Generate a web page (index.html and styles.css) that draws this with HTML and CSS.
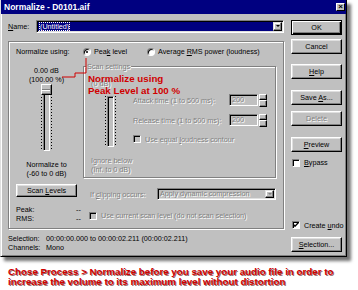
FILE: index.html
```html
<!DOCTYPE html>
<html lang="en">
<head>
    <meta charset="UTF-8">
    <meta name="viewport" content="width=device-width, initial-scale=1.0">
    <title>Normalize - D0101.aif</title>
    <link rel="stylesheet" href="styles.css">
</head>
<body>
    <div class="window">
        <div class="titlebar">
            <span>Normalize - D0101.aif</span>
            <span class="close">&#215;</span>
        </div>

        <div class="content">
            <div class="main">
                <!-- preset name -->
                <div class="name-row">
                    <span class="name-label"><u>N</u>ame:</span>
                    <div class="combo">
                        <div class="combo-text selected"><span class="focus">(Untitled)</span></div>
                        <div class="combo-arrow"><span class="arrow"></span></div>
                    </div>
                </div>

                <div class="group">
                    <div class="using-row">
                        <span class="using-label">Normalize using:</span>
                        <span class="radio peak"><span class="radio-dot checked"></span><span>Pea<u>k</u> level</span></span>
                        <span class="radio"><span class="radio-dot"></span><span>Average <u>R</u>MS power (loudness)</span></span>
                    </div>

                    <div class="level-row">
                        <div class="slider-col">
                            <div class="lines">0.00 dB<br>(100.00 %)</div>
                            <div class="slider">
                                <span class="ticks"></span>
                                <span class="track"></span>
                                <span class="ticks"></span>
                                <span class="thumb"></span>
                            </div>
                            <div class="lines caption">Normalize to<br>(-60 to 0 dB)</div>
                        </div>

                        <fieldset class="scan disabled">
                            <legend>Scan settings</legend>
                            <div class="scan-slider">
                                <div class="lines">(0 dB)</div>
                                <div class="slider small">
                                    <span class="ticks"></span>
                                    <span class="track"></span>
                                    <span class="ticks"></span>
                                </div>
                                <div class="lines caption">Ignore below<br>(Inf. to 0 dB)</div>
                            </div>
                            <div class="scan-fields">
                                <div class="field-row">
                                    <span class="field-label">Attack time (1 to 500 ms):</span>
                                    <span class="edit">200</span>
                                    <span class="spin"><span class="spin-up"></span><span class="spin-down"></span></span>
                                </div>
                                <div class="field-row">
                                    <span class="field-label">Release time (1 to 500 ms):</span>
                                    <span class="edit">200</span>
                                    <span class="spin"><span class="spin-up"></span><span class="spin-down"></span></span>
                                </div>
                                <div class="check-row loudness">
                                    <span class="check off"></span>
                                    <span>Use equal <u>l</u>oudness contour</span>
                                </div>
                            </div>
                        </fieldset>
                    </div>

                    <div class="scan-row">
                        <span class="btn scan-btn">Scan <u>L</u>evels</span>
                        <div class="clip disabled">
                            <span class="clip-label">If <u>c</u>lipping occurs:</span>
                            <div class="combo clip-combo">
                                <div class="combo-text">Apply dynamic compression</div>
                                <div class="combo-arrow"><span class="arrow"></span></div>
                            </div>
                        </div>
                    </div>

                    <div class="peak-row">
                        <div class="readings">
                            <span>Peak:</span><span>--</span>
                            <span>RMS:</span><span>--</span>
                        </div>
                        <div class="check-row disabled">
                            <span class="check off"></span>
                            <span>Use current scan level (do not scan selection)</span>
                        </div>
                    </div>
                </div>

                <div class="info">
                    <span>Selection:</span><span>00:00:00.000 to 00:00:02.211 (00:00:02.211)</span>
                    <span>Channels:</span><span>Mono</span>
                </div>
            </div>

            <div class="side">
                <span class="btn default">OK</span>
                <span class="btn cancel">Cancel</span>
                <span class="btn help"><u>H</u>elp</span>
                <span class="btn save">Save <u>A</u>s...</span>
                <span class="btn delete disabled">Delete</span>
                <span class="btn preview"><u>P</u>review</span>
                <div class="check-row bypass">
                    <span class="check"></span>
                    <span><u>B</u>ypass</span>
                </div>
                <div class="check-row undo">
                    <span class="check"><svg width="6" height="6" viewBox="0 0 6 6"><polyline points="0.5,2.5 2,4.2 5.5,0.5" fill="none" stroke="#000" stroke-width="1.3"/></svg></span>
                    <span>Create <u>u</u>ndo</span>
                </div>
                <span class="btn selection"><u>S</u>election...</span>
            </div>
        </div>

        <!-- callout drawn over the dialog -->
        <svg class="pointer" width="100" height="90">
            <polyline points="85,58 85,73 74,73 74,77 61,77" fill="none" stroke="#d00000" stroke-width="1"/>
        </svg>
        <div class="annotation">Normalize using<br>Peak Level at 100 %</div>
    </div>

    <p class="note">Chose Process &gt; Normalize before you save your audio file in order to<br>increase the volume to its maximum level without distortion</p>
</body>
</html>
```

FILE: styles.css
```css
body {
    margin: 0;
    background: #fff;
    font-family: "Liberation Sans", Arial, sans-serif;
    font-size: 7.2px;
    color: #000;
}
.window {
    position: relative;
    width: 347px;
    height: 257px;
    box-sizing: border-box;
    display: flex;
    flex-direction: column;
    background: #c0c0c0;
    border: 1px solid;
    border-top: 0;
    border-color: #dfdfdf #000 #000 #dfdfdf;
    box-shadow: inset 1px 0 #fff, inset -1px -1px #808080, 4px 4px 3px rgba(0, 0, 0, 0.55);
}
.titlebar {
    height: 15px;
    display: flex;
    align-items: center;
    justify-content: space-between;
    padding: 0 1px 0 3px;
    background: #000080;
    color: #fff;
    font-size: 8.5px;
    font-weight: bold;
}
.close {
    width: 9px;
    height: 8px;
    box-sizing: border-box;
    background: #c0c0c0;
    color: #000;
    border: 1px solid;
    border-color: #fff #000 #000 #fff;
    font-size: 8px;
    line-height: 6px;
    text-align: center;
}
.content {
    flex: 1;
    display: flex;
    gap: 7px;
    padding: 6px 4px 4px 7px;
}
.main {
    width: 276px;
    display: flex;
    flex-direction: column;
}
.side {
    width: 51px;
    display: flex;
    flex-direction: column;
}

/* shared controls */
.disabled, .disabled .edit, .disabled .combo-text {
    color: #808080;
    text-shadow: 1px 1px 0 #fff;
}
.lines {
    line-height: 9px;
    white-space: nowrap;
}
.btn {
    display: block;
    height: 15px;
    box-sizing: border-box;
    line-height: 13px;
    text-align: center;
    border: 1px solid;
    border-color: #fff #000 #000 #fff;
    box-shadow: inset -1px -1px #808080, inset 1px 1px #dfdfdf;
    white-space: nowrap;
}
.btn.default {
    border-color: #000;
    box-shadow: inset 1px 1px #fff, inset -1px -1px #000, inset -2px -2px #808080;
}
.combo {
    display: flex;
    box-sizing: border-box;
    height: 13px;
    padding: 1px;
    border: 1px solid;
    border-color: #808080 #fff #fff #808080;
    box-shadow: inset 1px 1px #000, inset -1px -1px #dfdfdf;
    background: #fff;
}
.combo-text {
    flex: 1;
    line-height: 9px;
    padding-left: 1px;
    white-space: nowrap;
    overflow: hidden;
}
.combo-text.selected {
    background: #000080;
    color: #fff;
}
.focus {
    outline: 1px dotted #fff;
    outline-offset: -1px;
    padding: 0 1px;
}
.combo-arrow {
    width: 9px;
    box-sizing: border-box;
    display: flex;
    align-items: center;
    justify-content: center;
    background: #c0c0c0;
    border: 1px solid;
    border-color: #dfdfdf #000 #000 #dfdfdf;
    box-shadow: inset -1px -1px #808080, inset 1px 1px #fff;
}
.arrow {
    width: 0;
    height: 0;
    border-left: 2px solid transparent;
    border-right: 2px solid transparent;
    border-top: 2px solid #000;
}
.disabled .arrow {
    border-top-color: #808080;
}
.check-row {
    display: flex;
    align-items: center;
    gap: 4px;
    height: 9px;
    line-height: 9px;
    white-space: nowrap;
}
.check {
    width: 8px;
    height: 8px;
    box-sizing: border-box;
    display: flex;
    align-items: center;
    justify-content: center;
    background: #fff;
    border: 1px solid;
    border-color: #808080 #fff #fff #808080;
    box-shadow: inset 1px 1px #000;
}
.check.off {
    background: #c0c0c0;
}

/* name row */
.name-row {
    display: flex;
    align-items: center;
    height: 13px;
}
.name-label {
    width: 28px;
}
.name-row .combo {
    flex: 1;
}

/* main group */
.group {
    margin-top: 8px;
    height: 188px;
    box-sizing: border-box;
    display: flex;
    flex-direction: column;
    padding: 5.5px 7px 0;
    border: 1px solid #808080;
    box-shadow: inset 1px 1px #fff, 1px 1px #fff;
}
.using-row {
    display: flex;
    align-items: center;
    height: 9px;
    line-height: 9px;
    white-space: nowrap;
}
.using-label {
    width: 67px;
}
.radio {
    display: flex;
    align-items: center;
    gap: 3px;
}
.radio.peak {
    width: 64px;
}
.radio-dot {
    position: relative;
    width: 8px;
    height: 8px;
    box-sizing: border-box;
    border-radius: 50%;
    background: #fff;
    border: 1px solid;
    border-color: #808080 #fff #fff #808080;
    box-shadow: inset 1px 1px #000;
}
.radio-dot.checked::after {
    content: "";
    position: absolute;
    left: 2px;
    top: 2px;
    width: 2px;
    height: 2px;
    border-radius: 50%;
    background: #000;
}
.level-row {
    display: flex;
    gap: 6px;
    margin-top: 6px;
}
.slider-col {
    width: 61px;
    padding-top: 4px;
    display: flex;
    flex-direction: column;
    align-items: center;
    text-align: center;
}
.slider {
    position: relative;
    display: flex;
    gap: 1px;
    height: 68px;
}
.ticks {
    width: 1px;
    height: 57px;
    margin-top: 10px;
    background: repeating-linear-gradient(to bottom, #000 0 1px, transparent 1px 3px);
}
.track {
    width: 7px;
    height: 66px;
    margin-top: 1px;
    box-sizing: border-box;
    border: 1px solid;
    border-color: #808080 #fff #fff #808080;
    box-shadow: inset 1px 1px #000;
}
.thumb {
    position: absolute;
    left: 0;
    top: 0;
    width: 11px;
    height: 11px;
    box-sizing: border-box;
    border: 1px solid;
    border-color: #fff #000 #000 #fff;
    background: linear-gradient(#c0c0c0 4px, #808080 4px 5px, #fff 5px 6px, #c0c0c0 6px);
    box-shadow: inset -1px -1px #808080;
}
.caption {
    margin-top: 7.5px;
}

/* scan settings */
.scan {
    flex: 1;
    min-width: 0;
    margin: 0;
    padding: 0 8px 2px 0;
    display: flex;
    border: 1px solid #808080;
    box-shadow: inset 1px 1px #fff, 1px 1px #fff;
}
.scan legend {
    margin-left: 2px;
    padding: 0 1px;
    line-height: 9px;
    background: #c0c0c0;
}
.scan-slider {
    width: 42px;
    padding: 8px 0 0 7px;
}
.slider.small {
    height: 51px;
    margin: 7.5px 0 0 14px;
    width: 11px;
}
.slider.small .ticks {
    height: 51px;
    margin-top: 0;
}
.slider.small .track {
    height: 51px;
    margin-top: 0;
}
.slider.small + .caption {
    margin-top: 9.5px;
}
.scan-fields {
    flex: 1;
    padding-top: 22.5px;
}
.field-row {
    display: flex;
    align-items: center;
    height: 13px;
    white-space: nowrap;
}
.field-row + .field-row {
    margin-top: 7px;
}
.field-label {
    flex: 1;
}
.edit {
    width: 29px;
    height: 12px;
    box-sizing: border-box;
    padding-left: 2px;
    line-height: 9px;
    border: 1px solid;
    border-color: #808080 #fff #fff #808080;
    box-shadow: inset 1px 1px #000;
}
.spin {
    width: 8px;
    height: 13px;
    margin-left: 1px;
    display: flex;
    flex-direction: column;
}
.spin span {
    flex: 1;
    border: 1px solid;
    border-color: #fff #000 #000 #fff;
    box-shadow: inset -1px -1px #808080;
}
.loudness {
    margin-top: 8px;
}

/* scan levels row */
.scan-row {
    display: flex;
    align-items: flex-start;
    margin-top: 6.5px;
}
.scan-btn {
    width: 61px;
    height: 13px;
    line-height: 11px;
}
.clip {
    display: flex;
    align-items: center;
    margin: 4px 0 0 13px;
    white-space: nowrap;
}
.clip-label {
    width: 67px;
}
.clip-combo {
    width: 119px;
    height: 12px;
    background: #c0c0c0;
}
.clip-combo .combo-text {
    line-height: 8px;
}
.peak-row {
    display: flex;
    align-items: center;
    margin-top: 5px;
}
.readings {
    width: 73px;
    display: grid;
    grid-template-columns: 60px auto;
    line-height: 9px;
}
.peak-row .check-row {
    margin-top: 3px;
}

/* selection info */
.info {
    margin-top: 5.5px;
    display: grid;
    grid-template-columns: 38px auto;
    line-height: 9px;
    white-space: nowrap;
}

/* right column */
.side .cancel {
    margin-top: 4px;
}
.side .help {
    margin-top: 10px;
}
.side .save {
    margin-top: 11px;
}
.side .delete {
    margin-top: 6px;
}
.side .preview {
    margin-top: 11px;
}
.bypass {
    margin: 6.5px 0 0 1px;
}
.undo {
    margin: auto 0 7.5px 1px;
}

/* red callouts */
.pointer {
    position: absolute;
    left: 0;
    top: 0;
}
.annotation {
    position: absolute;
    left: 87px;
    top: 72.6px;
    font-size: 9.75px;
    font-weight: bold;
    line-height: 12px;
    color: #d00000;
    white-space: nowrap;
}
.note {
    margin: 9.6px 0 0 8px;
    font-size: 9.75px;
    font-weight: bold;
    line-height: 10px;
    color: #d00000;
    text-shadow: 1px 1px 0 rgba(70, 0, 0, 0.6);
    white-space: nowrap;
}
```
